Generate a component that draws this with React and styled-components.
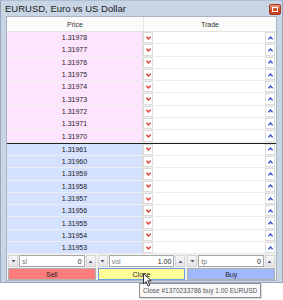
import styled, { createGlobalStyle } from "styled-components";

const GlobalStyle = createGlobalStyle`
    html, body {
        margin: 0;
        min-height: 300px;
        background: #ffffff;
        font-family: "Liberation Sans", Arial, sans-serif;
    }
`;

const asks = ['1.31978', '1.31977', '1.31976', '1.31975', '1.31974', '1.31973', '1.31972', '1.31971', '1.31970'];
const bids = ['1.31961', '1.31960', '1.31959', '1.31958', '1.31957', '1.31956', '1.31955', '1.31954', '1.31953'];

const Chevron = ({ up, color }) => (
    <svg width="5" height="4" viewBox="0 0 5 4">
        <path d={up ? 'M0.4 3.3 L2.5 1 L4.6 3.3' : 'M0.4 0.7 L2.5 3 L4.6 0.7'} fill="none" stroke={color} strokeWidth="1.4" />
    </svg>
);

const SmallArrow = ({ up }) => (
    <svg width="5" height="3" viewBox="0 0 5 3">
        <path d={up ? 'M0.5 3 L2.5 0.5 L4.5 3 Z' : 'M0.5 0 L2.5 2.5 L4.5 0 Z'} fill="#4a5a7a" />
    </svg>
);

const PriceRow = ({ price, side }) => (
    <Row>
        <PriceCell side={side}>{price}</PriceCell>
        <TradeCell>
            <StepBtn><Chevron color="#e23a3a" /></StepBtn>
            <TradeField />
            <StepBtn><Chevron up color="#3a4fd0" /></StepBtn>
        </TradeCell>
    </Row>
);

const Spin = ({ label, value }) => (
    <SpinGroup>
        <MiniBtn><SmallArrow /></MiniBtn>
        <SpinInput>
            <span>{label}</span>
            <b>{value}</b>
        </SpinInput>
        <MiniBtn><SmallArrow up /></MiniBtn>
    </SpinGroup>
);

const App = () => {
    return (
        <>
            <GlobalStyle />
            <Page>
                <Window>
                    <TitleBar>
                        <Title>EURUSD, Euro vs US Dollar</Title>
                        <CloseBox><CloseGlyph /></CloseBox>
                    </TitleBar>
                    <Client>
                        <Grid>
                            <Header>
                                <HeadCell>Price</HeadCell>
                                <HeadCell>Trade</HeadCell>
                            </Header>
                            {asks.map((p) => <PriceRow key={p} price={p} side="ask" />)}
                            <Spread />
                            {bids.map((p) => <PriceRow key={p} price={p} side="bid" />)}
                        </Grid>
                        <Controls>
                            <Spin label="sl" value="0" />
                            <Spin label="vol" value="1.00" />
                            <Spin label="tp" value="0" />
                        </Controls>
                        <Actions>
                            <ActionBtn kind="sell">Sell</ActionBtn>
                            <ActionBtn kind="close">
                                Close
                                <Cursor>
                                    <svg width="10" height="14" viewBox="0 0 10 14">
                                        <path d="M0.5 0.5 L0.5 11 L3 8.5 L5 13 L6.8 12.2 L4.8 7.8 L8.2 7.8 Z" fill="#ffffff" stroke="#222" strokeWidth="0.9" />
                                    </svg>
                                </Cursor>
                            </ActionBtn>
                            <ActionBtn kind="buy">Buy</ActionBtn>
                        </Actions>
                    </Client>
                </Window>
                <Tooltip>Close #1370233786 buy 1.00 EURUSD</Tooltip>
            </Page>
        </>
    );
};

const Page = styled.div`
    position: relative;
    width: 283px;
    height: 300px;
`;
const Window = styled.div`
    width: 283px;
    height: 283px;
    box-sizing: border-box;
    background: #c7d5e4;
    border: 1px solid #97a8bb;
    border-top-color: #aebfd1;
    display: flex;
    flex-direction: column;
`;
const TitleBar = styled.div`
    height: 15px;
    display: flex;
    align-items: center;
    justify-content: space-between;
    padding: 0 1px 0 4px;
`;
const Title = styled.span`
    font-size: 9.5px;
    color: #1b1b1b;
    margin-top: 1px;
`;
const CloseBox = styled.div`
    width: 12px;
    height: 11px;
    margin-top: 3px;
    box-sizing: border-box;
    border: 1px solid #9a3a22;
    border-radius: 2px;
    background: linear-gradient(#f09a80, #d24a28 55%, #c8401f);
    display: flex;
    align-items: center;
    justify-content: center;
`;
const CloseGlyph = styled.div`
    width: 4px;
    height: 3px;
    border: 1px solid #ffffff;
`;
const Client = styled.div`
    margin: 1px 5px 1px;
    background: #f0f0f0;
    border: 1px solid #a9b4c2;
    display: flex;
    flex-direction: column;
    flex: 1;
`;
const Grid = styled.div`
    display: flex;
    flex-direction: column;
    background: #ffffff;
`;
const Header = styled.div`
    display: grid;
    grid-template-columns: 136px 1fr;
    height: 14px;
    background: #fbfbfb;
    border-bottom: 1px solid #e2e2e2;
`;
const HeadCell = styled.div`
    font-size: 7px;
    color: #333;
    display: flex;
    align-items: center;
    justify-content: center;
    & + & {
        border-left: 1px solid #e2e2e2;
    }
`;
const Row = styled.div`
    display: grid;
    grid-template-columns: 136px 1fr;
    height: 12.3px;
    box-sizing: border-box;
    border-bottom: 1px solid #ececec;
`;
const PriceCell = styled.div`
    background: ${(props) => (props.side === 'ask' ? '#ffe4ff' : '#d4e2ff')};
    border-right: 1px solid #dadada;
    font-size: 7px;
    color: #1a1a1a;
    display: flex;
    align-items: center;
    justify-content: center;
`;
const TradeCell = styled.div`
    display: flex;
    align-items: stretch;
    padding: 0 1px 0 0;
    background: #ffffff;
`;
const StepBtn = styled.div`
    width: 10px;
    box-sizing: border-box;
    border: 1px solid #dcdcdc;
    background: #ffffff;
    display: flex;
    align-items: center;
    justify-content: center;
`;
const TradeField = styled.div`
    flex: 1;
`;
const Spread = styled.div`
    height: 1px;
    background: #222;
`;
const Controls = styled.div`
    display: grid;
    grid-template-columns: repeat(3, 1fr);
    gap: 2px;
    padding: 1px 1px 0;
`;
const SpinGroup = styled.div`
    display: flex;
    height: 12px;
`;
const MiniBtn = styled.div`
    width: 10px;
    box-sizing: border-box;
    border: 1px solid #d6d6d6;
    background: linear-gradient(#f6f6f6, #e4e4e4);
    display: flex;
    align-items: center;
    justify-content: center;
`;
const SpinInput = styled.div`
    flex: 1;
    margin: 0 1px;
    box-sizing: border-box;
    border: 1px solid #a8a8a8;
    background: #ffffff;
    font-size: 7px;
    color: #222;
    display: flex;
    align-items: center;
    justify-content: space-between;
    padding: 0 2px;
    & span {
        color: #777;
    }
    & b {
        font-weight: normal;
    }
`;
const Actions = styled.div`
    display: grid;
    grid-template-columns: repeat(3, 1fr);
    gap: 2px;
    padding: 1px 1px 0;
`;
const ActionBtn = styled.div`
    position: relative;
    height: 12px;
    box-sizing: border-box;
    font-size: 7px;
    color: #222;
    display: flex;
    align-items: center;
    justify-content: center;
    border: 1px solid ${(props) => (props.kind === 'close' ? '#6aa0e0' : '#b0b0b0')};
    background: ${(props) => (
        props.kind === 'sell' ? '#ff7d7d' :
        (props.kind === 'close' ? '#ffff9a' : '#9fb8ff')
    )};
`;
const Cursor = styled.div`
    position: absolute;
    left: 44px;
    top: 4px;
    z-index: 5;
    line-height: 0;
`;
const Tooltip = styled.div`
    position: absolute;
    left: 139px;
    top: 283px;
    z-index: 4;
    white-space: nowrap;
    font-size: 6.5px;
    color: #555;
    background: #f8f8f8;
    border: 1px solid #8f8f8f;
    padding: 3px 3px;
    box-shadow: 1px 1px 1px rgba(0, 0, 0, 0.15);
`;

export default App;
